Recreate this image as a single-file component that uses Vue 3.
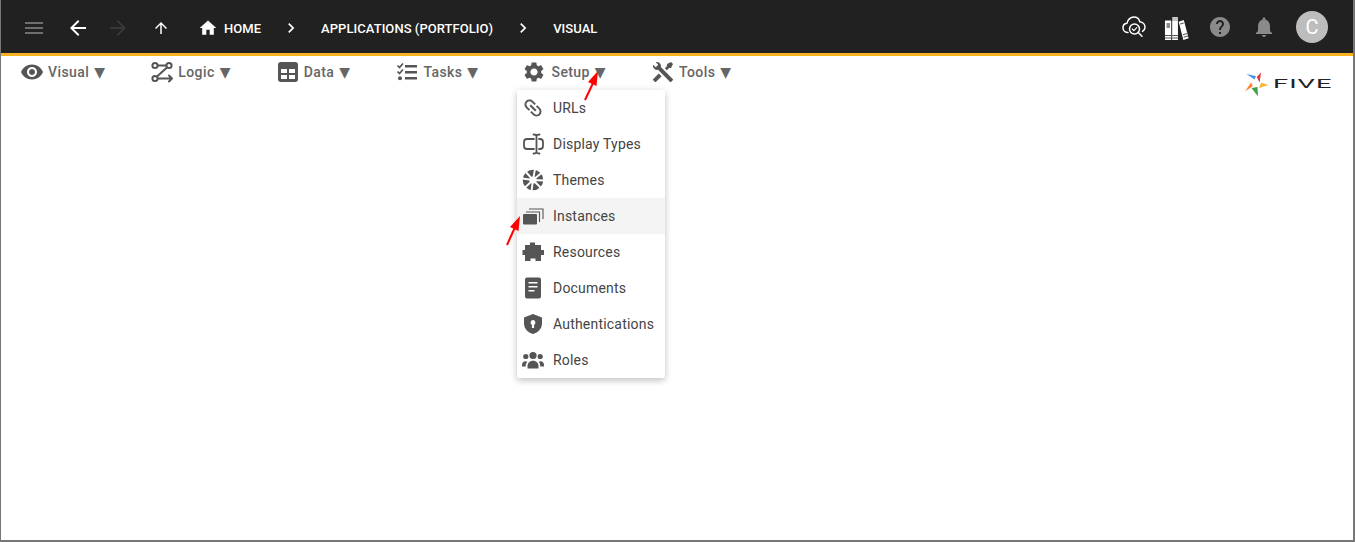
<template>
  <div class="frame">
    <header class="topbar">
      <div class="topbar__left">
        <button class="icon-btn icon-btn--menu"><svg viewBox="0 0 24 24"><path :d="paths.menu" /></svg></button>
        <button class="icon-btn icon-btn--back"><svg viewBox="0 0 24 24"><path :d="paths.back" /></svg></button>
        <button class="icon-btn icon-btn--forward"><svg viewBox="0 0 24 24"><path :d="paths.forward" /></svg></button>
        <button class="icon-btn icon-btn--up"><svg viewBox="0 0 24 24"><path :d="paths.up" /></svg></button>
        <nav class="crumbs">
          <svg class="crumbs__home" viewBox="0 0 24 24"><path :d="paths.home" /></svg>
          <span class="crumbs__label">HOME</span>
          <svg class="crumbs__sep" viewBox="0 0 24 24"><path :d="paths.chevron" /></svg>
          <span class="crumbs__label">APPLICATIONS (PORTFOLIO)</span>
          <svg class="crumbs__sep" viewBox="0 0 24 24"><path :d="paths.chevron" /></svg>
          <span class="crumbs__label">VISUAL</span>
        </nav>
      </div>
      <div class="topbar__right">
        <svg class="tool tool--cloud" viewBox="0 0 24 24" fill="none" stroke="#fff" stroke-width="1.5" stroke-linecap="round" stroke-linejoin="round">
          <path d="M6 17.500C3.300 17.500 1 15.500 1 12.800c0-2.300 1.700-4.200 3.900-4.500C5.500 5 8.500 2 11.800 2c2.900 0 5.300 1.900 6 4.700C20.800 7 23 9.300 23 12.200c0 1.800-1 3.300-2.500 4.200" />
          <circle cx="12.500" cy="14" r="5" />
          <path d="M10.300 14l1.600 1.600 2.800-3" stroke-width="1.200" />
          <path d="M16.300 17.500l3.700 3.700" />
        </svg>
        <svg class="tool tool--books" viewBox="0 0 26 26" preserveAspectRatio="none">
          <path fill="#fff" d="M1 5.500h6.500v19.500H1z" />
          <path fill="#c4c4c4" d="M8.500 2h6v4h-6z" />
          <path fill="#fff" d="M8.500 6h6v19h-6z" />
          <path fill="#fff" d="M15.300 6.700l5.300-1.700 5 18.200-5.500 1.800z" />
          <path fill="#8a8a8a" d="M2.600 8h3.600v5H2.600z" />
          <path fill="#555" d="M1 20h6.500v1H1zM1 22.500h6.500v1H1zM8.500 20h6v1h-6zM8.500 22.500h6v1h-6z" />
          <path fill="#555" d="M19.500 19.300l4.500-1.300.3 1-4.500 1.300zM20.200 21.800l4.500-1.300.3 1-4.500 1.300zM16.800 8.500l3.500-1 .3 1-3.500 1z" />
        </svg>
        <svg class="tool tool--help" viewBox="0 0 24 24"><path :d="paths.help" /></svg>
        <svg class="tool tool--bell" viewBox="0 0 24 24"><path :d="paths.bell" /></svg>
        <span class="avatar">C</span>
      </div>
    </header>

    <div class="menubar">
      <div v-for="item in menuItems" :key="item.label" class="menubar__item">
        <svg class="menubar__icon" viewBox="0 0 24 24" v-html="item.icon"></svg>
        <span class="menubar__label">{{ item.label }}</span>
        <span class="menubar__caret">▼</span>
      </div>

      <div class="logo">
        <svg class="logo__mark" viewBox="0 0 24 24">
          <path fill="#4a90e2" d="M1.500 2l9.500 2.200-1.500 3.300z" />
          <path fill="#e53935" d="M16 0.500l-1.300 10-3-5.500z" />
          <path fill="#f9b52c" d="M23.500 13l-9.500 3 2.200-5.200z" />
          <path fill="#43a047" d="M13 24.500l-6.500-8.500 6-1z" />
          <path fill="#ff7f27" d="M0 19.500l6-9 1.800 3.500z" />
        </svg>
        <span class="logo__word">FIVE</span>
      </div>
    </div>

    <ul class="dropdown">
      <li
        v-for="entry in setupEntries"
        :key="entry.label"
        class="dropdown__row"
        :class="{ 'dropdown__row--hover': entry.label === 'Instances' }"
      >
        <svg class="dropdown__icon" viewBox="0 0 24 24" v-html="entry.icon"></svg>
        <span>{{ entry.label }}</span>
      </li>
    </ul>

    <!-- annotation arrows -->
    <svg class="arrows" viewBox="0 0 1355 542">
      <path d="M585 100L594.500 80" stroke="#f00" stroke-width="2" fill="none" />
      <path d="M598 71L596.500 86L588 82z" fill="#f00" />
      <path d="M507 245L516 225" stroke="#f00" stroke-width="2" fill="none" />
      <path d="M520 216L518.500 231L510 227z" fill="#f00" />
    </svg>
  </div>
</template>

<script setup>
const paths = {
  menu: 'M3 18h18v-2H3v2zm0-5h18v-2H3v2zm0-7v2h18V6H3z',
  back: 'M20 11H7.830l5.590-5.590L12 4l-8 8 8 8 1.410-1.410L7.830 13H20v-2z',
  forward: 'M12 4l-1.410 1.410L16.170 11H4v2h12.170l-5.580 5.590L12 20l8-8z',
  up: 'M4 12l1.410 1.410L11 7.830V20h2V7.830l5.580 5.590L20 12l-8-8-8 8z',
  home: 'M10 20v-6h4v6h5v-8h3L12 3 2 12h3v8z',
  chevron: 'M10 6L8.590 7.410 13.170 12l-4.580 4.590L10 18l6-6z',
  help: 'M12 2C6.480 2 2 6.480 2 12s4.480 10 10 10 10-4.480 10-10S17.520 2 12 2zm1 17h-2v-2h2v2zm2.070-7.750l-.9.920C13.450 12.900 13 13.500 13 15h-2v-.5c0-1.100.450-2.100 1.170-2.830l1.240-1.260c.370-.360.590-.860.590-1.410 0-1.100-.9-2-2-2s-2 .9-2 2H8c0-2.210 1.790-4 4-4s4 1.790 4 4c0 .880-.360 1.680-.930 2.250z',
  bell: 'M12 22c1.100 0 2-.9 2-2h-4c0 1.100.890 2 2 2zm6-6v-5c0-3.070-1.640-5.640-4.500-6.320V4c0-.830-.670-1.500-1.500-1.500s-1.500.670-1.500 1.500v.680C7.630 5.360 6 7.920 6 11v5l-2 2v1h16v-1l-2-2z'
}

const fill = (d) => `<path fill="#555" d="${d}"/>`

const menuItems = [
  {
    label: 'Visual',
    icon: fill('M12 4.500C7 4.500 2.730 7.610 1 12c1.730 4.390 6 7.500 11 7.500s9.270-3.110 11-7.500c-1.730-4.390-6-7.500-11-7.500zM12 17c-2.760 0-5-2.240-5-5s2.240-5 5-5 5 2.240 5 5-2.240 5-5 5zm0-8c-1.660 0-3 1.340-3 3s1.340 3 3 3 3-1.340 3-3-1.340-3-3-3z')
  },
  {
    label: 'Logic',
    icon: `<g fill="none" stroke="#555" stroke-width="2" stroke-linecap="round" stroke-linejoin="round">
      <circle cx="5" cy="5.500" r="2.600"/><circle cx="19" cy="5.500" r="2.600"/><circle cx="5" cy="18.500" r="2.600"/>
      <path d="M8 5.500h8M7 16.500L17 7.500M8 18.500h14M19 15.500l3 3-3 3"/></g>`
  },
  {
    label: 'Data',
    icon: fill('M5 2h14a3 3 0 0 1 3 3v14a3 3 0 0 1-3 3H5a3 3 0 0 1-3-3V5a3 3 0 0 1 3-3zM5 9v4h6V9zM13 9v4h6V9zM5 15v4h6v-4zM13 15v4h6v-4z').replace('<path', '<path fill-rule="evenodd"')
  },
  {
    label: 'Tasks',
    icon: `<path fill="#555" d="M10 5h12v2.400H10zM10 11h12v2.400H10zM10 17h12v2.400H10z"/>
      <circle cx="5" cy="18.300" r="2" fill="#555"/>
      <path fill="none" stroke="#555" stroke-width="1.700" d="M2.500 5.500l2 2 3.500-4M2.500 11.500l2 2 3.500-4"/>`
  },
  {
    label: 'Setup',
    icon: `<g transform="translate(-2 0)">` + fill('M19.140 12.940c.040-.3.060-.610.060-.940 0-.320-.020-.640-.070-.940l2.030-1.580c.180-.140.230-.410.120-.610l-1.920-3.320c-.120-.220-.370-.290-.590-.220l-2.390.960c-.5-.380-1.030-.7-1.620-.940l-.360-2.540c-.040-.240-.240-.410-.480-.410h-3.840c-.240 0-.430.170-.470.410l-.360 2.540c-.590.240-1.130.570-1.620.940l-2.390-.960c-.220-.080-.470 0-.590.220L2.740 8.870c-.120.210-.080.470.120.610l2.030 1.580c-.050.3-.090.630-.09.940s.020.640.070.940l-2.030 1.580c-.180.140-.230.410-.12.610l1.920 3.320c.120.220.370.290.590.220l2.390-.960c.5.380 1.030.7 1.620.940l.360 2.540c.050.240.240.410.480.410h3.840c.240 0 .440-.170.470-.410l.360-2.540c.590-.240 1.130-.560 1.620-.940l2.390.960c.220.080.470 0 .590-.220l1.920-3.320c.120-.220.070-.470-.120-.610l-2.010-1.580zM12 15.600c-1.980 0-3.600-1.620-3.600-3.600s1.620-3.600 3.600-3.600 3.600 1.620 3.600 3.600-1.620 3.600-3.600 3.600z') + `</g>`
  },
  {
    label: 'Tools',
    icon: fill('M21.710 20.290L20.290 21.710A1 1 0 0 1 18.880 21.710L7 9.850A3.810 3.810 0 0 1 6 10A4 4 0 0 1 2.220 4.700L4.760 7.240L5.290 6.710L6.710 5.290L7.240 4.760L4.700 2.220A4 4 0 0 1 10 6A3.810 3.810 0 0 1 9.850 7L21.710 18.880A1 1 0 0 1 21.710 20.290M2.290 18.880A1 1 0 0 0 2.290 20.290L3.710 21.710A1 1 0 0 0 5.120 21.710L10.590 16.250L7.760 13.420M20 2L16 4V6L13.830 8.170L15.830 10.170L18 8H20L22 4Z')
  }
]

const setupEntries = [
  {
    label: 'URLs',
    icon: `<path fill="#555" transform="rotate(45 12 12)" d="M3.900 12c0-1.710 1.390-3.100 3.100-3.100h4V7H7c-2.760 0-5 2.240-5 5s2.240 5 5 5h4v-1.900H7c-1.710 0-3.100-1.390-3.100-3.100zM8 13h8v-2H8v2zm9-6h-4v1.900h4c1.710 0 3.100 1.390 3.100 3.100s-1.390 3.100-3.100 3.100h-4V17h4c2.760 0 5-2.240 5-5s-2.240-5-5-5z"/>`
  },
  {
    label: 'Display Types',
    icon: `<g fill="none" stroke="#555" stroke-width="1.800" stroke-linecap="round">
      <path d="M13 7H6a3 3 0 0 0-3 3v4a3 3 0 0 0 3 3h7M18 7h1a3 3 0 0 1 3 3v4a3 3 0 0 1-3 3h-1"/>
      <path d="M15.500 4v16M12.500 2.500c1.500 0 3 .2 3 1.500 0-1.300 1.500-1.500 3-1.500M12.500 21.500c1.500 0 3-.2 3-1.500 0 1.300 1.500 1.500 3 1.500"/></g>`
  },
  {
    label: 'Themes',
    icon: `<circle cx="12" cy="12" r="10.300" fill="#555"/>
      <circle cx="12" cy="12" r="3.600" fill="#fff"/>
      <g stroke="#fff" stroke-width="1.900">
        <path d="M12 12L14 1M12 12L21 4.500M12 12L23 12.500M12 12L20 20M12 12L10.500 23M12 12L3.500 20M12 12L1 10.500M12 12L4.500 3.500"/>
      </g>`
  },
  {
    label: 'Instances',
    icon: `<rect x="2" y="10" width="14" height="10.500" rx="1" fill="#555"/>
      <path fill="none" stroke="#555" stroke-width="1.100" d="M5 8h13.500v10M8 5h14v10"/>`
  },
  {
    label: 'Resources',
    icon: fill('M4 5h5V2.500h5V5h6v5h3v5h-3v6h-5.500v-2.500h-5V21H4v-6H1.500v-5H4z')
  },
  {
    label: 'Documents',
    icon: `<path fill="#555" fill-rule="evenodd" d="M6 1.500h12a2 2 0 0 1 2 2v17a2 2 0 0 1-2 2H6a2 2 0 0 1-2-2v-17a2 2 0 0 1 2-2zM7.500 6v1.600h9V6zM7.500 10v1.600h9V10zM7.500 14v1.600h6V14z"/>`
  },
  {
    label: 'Authentications',
    icon: `<path fill="#555" fill-rule="evenodd" d="M12 2l9 3.500v6c0 5-3.500 9-9 10.500C6.500 20.500 3 16.500 3 11.500v-6zM12 8a2.500 2.500 0 0 0-1.100 4.700V16h2.200v-3.300A2.500 2.500 0 0 0 12 8z"/>`
  },
  {
    label: 'Roles',
    icon: `<g fill="#555">
      <circle cx="12" cy="7.500" r="3.600"/><circle cx="4.800" cy="8.500" r="2.600"/><circle cx="19.200" cy="8.500" r="2.600"/>
      <path d="M6.500 20.500v-2.500c0-3 2.500-5.200 5.500-5.200s5.500 2.200 5.500 5.200v2.500z"/>
      <path d="M1 18.500v-1.500c0-2 1.500-3.700 3.500-3.700.8 0 1.400.2 2 .5-1.200 1-1.800 2.500-1.800 4.700zM23 18.500v-1.500c0-2-1.500-3.700-3.500-3.700-.8 0-1.400.2-2 .5 1.200 1 1.800 2.500 1.800 4.700z"/>
    </g>`
  }
]
</script>

<style scoped>
.frame {
  position: relative;
  height: 542px;
  box-sizing: border-box;
  border: 1px solid #777;
  border-width: 0 2px 2px 1px;
  background: #fff;
  overflow: hidden;
  font-family: Roboto, "Liberation Sans", sans-serif;
}

.topbar {
  height: 56px;
  box-sizing: border-box;
  border-bottom: 3px solid #f6b221;
  background: #212121;
  display: flex;
  justify-content: space-between;
  align-items: center;
}

.topbar__left,
.topbar__right,
.crumbs {
  display: flex;
  align-items: center;
}

.topbar__left {
  padding-top: 2px;
}

.icon-btn {
  display: flex;
  padding: 0;
  border: 0;
  background: none;
}

.icon-btn svg {
  width: 24px;
  height: 24px;
  fill: #fff;
}

.icon-btn--menu {
  margin-left: 21px;
}

.icon-btn--menu svg {
  fill: #6e6e6e;
}

.icon-btn--back {
  margin-left: 20px;
}

.icon-btn--forward {
  margin-left: 16px;
}

.icon-btn--forward svg {
  fill: #383838;
}

.icon-btn--up {
  margin-left: 22px;
}

.icon-btn--up svg {
  width: 18px;
  height: 18px;
}

.crumbs {
  margin-left: 28px;
  color: #fff;
  font-size: 13px;
  font-weight: 500;
  letter-spacing: 0.05px;
}

.crumbs__label {
  padding-top: 2px;
}

.crumbs svg {
  fill: #fff;
}

.crumbs__home {
  width: 20px;
  height: 20px;
  margin-right: 6px;
}

.crumbs__sep {
  width: 20px;
  height: 20px;
  margin: 0 20px;
}

.topbar__right {
  padding-right: 25px;
}

.tool {
  display: block;
}

.tool--cloud {
  width: 24px;
  height: 24px;
}

.tool--books {
  width: 25px;
  height: 26px;
  margin-top: 2px;
  margin-left: 18px;
}

.tool--help {
  width: 24px;
  height: 24px;
  margin-left: 19px;
  fill: #8a8a8a;
}

.tool--bell {
  width: 24px;
  height: 24px;
  margin-left: 20px;
  fill: #8a8a8a;
}

.avatar {
  width: 32px;
  height: 32px;
  margin-left: 20px;
  border-radius: 50%;
  background: #bdbdbd;
  color: #fff;
  font-size: 20px;
  display: flex;
  align-items: center;
  justify-content: center;
}

.menubar {
  display: flex;
  align-items: center;
  gap: 45px;
  padding: 4px 0 0 19px;
  height: 24px;
  color: #666;
  font-size: 14px;
  font-weight: 500;
  letter-spacing: 0.4px;
}

.menubar__item {
  display: flex;
  align-items: center;
}

.menubar__icon {
  width: 24px;
  height: 24px;
  margin-right: 4px;
}

.menubar__caret {
  margin-left: 5px;
  font-size: 14px;
  font-family: "DejaVu Sans", sans-serif;
}

.logo {
  margin-left: auto;
  margin-right: 22px;
  margin-top: 24px;
  display: flex;
  align-items: center;
  gap: 4px;
}

.logo__mark {
  width: 24px;
  height: 24px;
}

.logo__word {
  color: #222;
  font-size: 13px;
  font-weight: 400;
  letter-spacing: 0.5px;
  padding-bottom: 2px;
  transform: scaleX(2.1);
  transform-origin: left center;
  width: 58px;
}

.dropdown {
  position: absolute;
  left: 516px;
  top: 90px;
  width: 148px;
  margin: 0;
  padding: 0;
  list-style: none;
  background: #fff;
  border-radius: 2px;
  box-shadow: 0 3px 6px rgba(0, 0, 0, 0.16), 0 1px 8px rgba(0, 0, 0, 0.1);
}

.dropdown__row {
  height: 36px;
  display: flex;
  align-items: center;
  padding-left: 4px;
  color: #444;
  font-size: 14px;
  letter-spacing: 0.2px;
}

.dropdown__row--hover {
  background: #f4f4f4;
}

.dropdown__icon {
  width: 24px;
  height: 24px;
  margin-right: 8px;
}

.arrows {
  position: absolute;
  left: -1px;
  top: 0;
  width: 1355px;
  height: 542px;
  pointer-events: none;
}
</style>
